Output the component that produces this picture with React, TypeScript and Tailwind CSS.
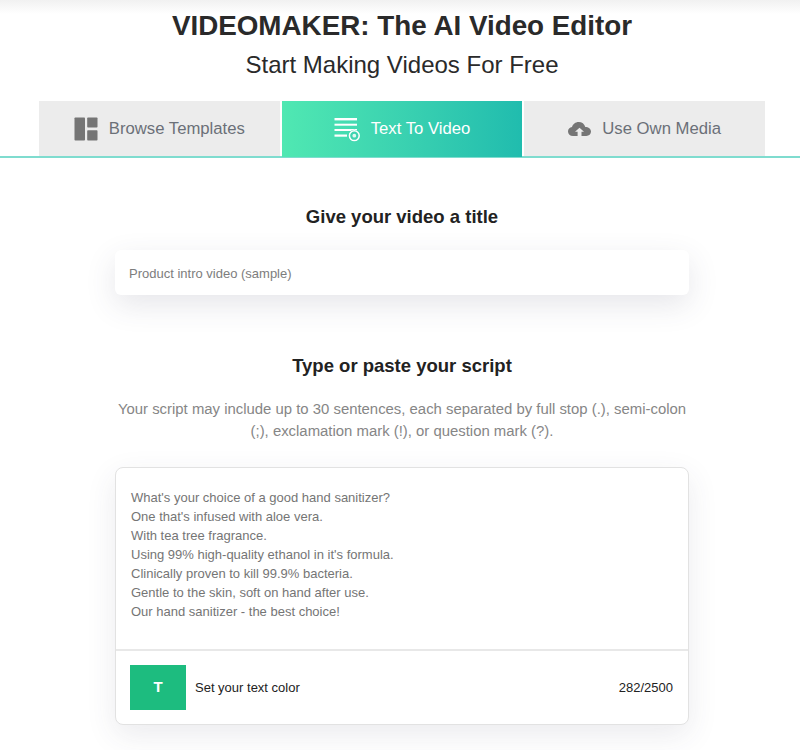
import React from "react";

function TemplatesIcon() {
  return (
    <svg width="24" height="24" viewBox="0 0 24 24" className="shrink-0">
      <rect x="0.5" y="0.5" width="10.5" height="23" rx="0.8" fill="#757575" />
      <rect x="13.2" y="0.5" width="10.3" height="10" rx="0.8" fill="#757575" />
      <rect x="13.2" y="13.2" width="10.3" height="10.3" rx="0.8" fill="#757575" />
    </svg>
  );
}

function TextIcon() {
  return (
    <svg width="27" height="25" viewBox="0 0 27 25" className="shrink-0" fill="none">
      <rect x="0.5" y="1" width="22.5" height="2.4" fill="#fff" />
      <rect x="0.5" y="6.7" width="22.5" height="2" fill="#fff" />
      <rect x="0.5" y="12" width="22.5" height="2" fill="#fff" />
      <rect x="0.5" y="17.5" width="12.5" height="2.2" fill="#fff" />
      <circle cx="20.3" cy="18.7" r="6" fill="#3fd4b0" />
      <circle cx="20.3" cy="18.7" r="4.9" stroke="#fff" strokeWidth="1.5" />
      <circle cx="20.3" cy="18.7" r="1.9" fill="#e4f8f2" />
    </svg>
  );
}

function CloudIcon() {
  return (
    <svg width="23" height="14" viewBox="0 0 23 14" className="shrink-0">
      <path
        d="M5 14C2 14 0 12 0 9.5 0 7.2 1.7 5.4 4 5.1 4.8 2.2 7.4 0 10.7 0c3.2 0 5.8 2 6.6 4.9 3.2 0 5.7 2 5.7 4.7 0 2.5-2 4.4-4.7 4.4h-4.8V9.8h2.5L11.5 5.8 7 9.8h2.6V14z"
        fill="#757575"
      />
    </svg>
  );
}

function Tab({ icon, label, active }: { icon: React.ReactNode; label: string; active?: boolean }) {
  return (
    <div
      className={
        active
          ? "flex h-[56px] flex-1 items-center justify-center gap-[10px] bg-gradient-to-r from-[#50e8b2] to-[#20bcae] text-[16.7px] text-white"
          : "flex h-[55px] flex-1 items-center justify-center gap-[11px] bg-[#ececec] text-[16.7px] text-[#6b7078]"
      }
    >
      {icon}
      <span>{label}</span>
    </div>
  );
}

export default function App() {
  return (
    <div className="relative h-[750px] w-[800px] overflow-hidden bg-white font-['Liberation_Sans',Arial,sans-serif] text-[#222]">
      <div className="w-[804px]">
        <div className="h-[14px] bg-gradient-to-b from-[#f1f1f1] to-white" />
        <h1 className="mt-[-4px] text-center text-[27.8px] font-bold leading-[32px] text-[#2a2a2a]">
          VIDEOMAKER: The AI Video Editor
        </h1>
        <p className="mt-[9px] text-center text-[24px] leading-[28px] text-[#2a2a2a]">Start Making Videos For Free</p>

        <div className="mt-[22px] h-[57px] border-b-2 border-[#7fdccf]">
          <div className="mx-[39px] flex h-[56px] items-start gap-[2px]">
            <Tab icon={<TemplatesIcon />} label="Browse Templates" />
            <Tab icon={<TextIcon />} label="Text To Video" active />
            <Tab icon={<CloudIcon />} label="Use Own Media" />
          </div>
        </div>

        <h2 className="mt-[48px] text-center text-[18.5px] font-bold leading-[22px] text-[#222]">Give your video a title</h2>
        <div className="mx-auto mt-[22px] flex h-[45px] w-[574px] items-center rounded-[6px] bg-white pl-[14px] pt-[2px] text-[13px] text-[#7d7d7d] shadow-[0_10px_30px_rgba(60,60,90,0.13)]">
          Product intro video (sample)
        </div>

        <h2 className="mt-[60px] text-center text-[18.5px] font-bold leading-[22px] text-[#222]">Type or paste your script</h2>
        <p className="mx-auto mt-[21px] w-[574px] text-center text-[14.9px] leading-[22px] text-[#868686]">
          Your script may include up to 30 sentences, each separated by full stop (.), semi-colon (;), exclamation mark (!), or question mark (?).
        </p>

        <div className="mx-auto mt-[25px] w-[574px] rounded-[8px] border border-[#e2e2e2] bg-white shadow-[0_10px_30px_rgba(60,60,90,0.1)]">
          <div className="h-[183px] border-b-2 border-[#e8e8e8] px-[15px] pt-[20px] text-[13px] leading-[19px] text-[#757575]">
            <div>What's your choice of a good hand sanitizer?</div>
            <div>One that's infused with aloe vera.</div>
            <div>With tea tree fragrance.</div>
            <div>Using 99% high-quality ethanol in it's formula.</div>
            <div>Clinically proven to kill 99.9% bacteria.</div>
            <div>Gentle to the skin, soft on hand after use.</div>
            <div>Our hand sanitizer - the best choice!</div>
          </div>
          <div className="flex h-[73px] items-center pl-[14px] pr-[15px] text-[13px] text-[#222]">
            <div className="flex h-[45px] w-[56px] items-center justify-center bg-[#1dbc7f] text-[15px] font-bold text-white">T</div>
            <span className="ml-[9px]">Set your text color</span>
            <span className="ml-auto">282/2500</span>
          </div>
        </div>
      </div>
    </div>
  );
}
